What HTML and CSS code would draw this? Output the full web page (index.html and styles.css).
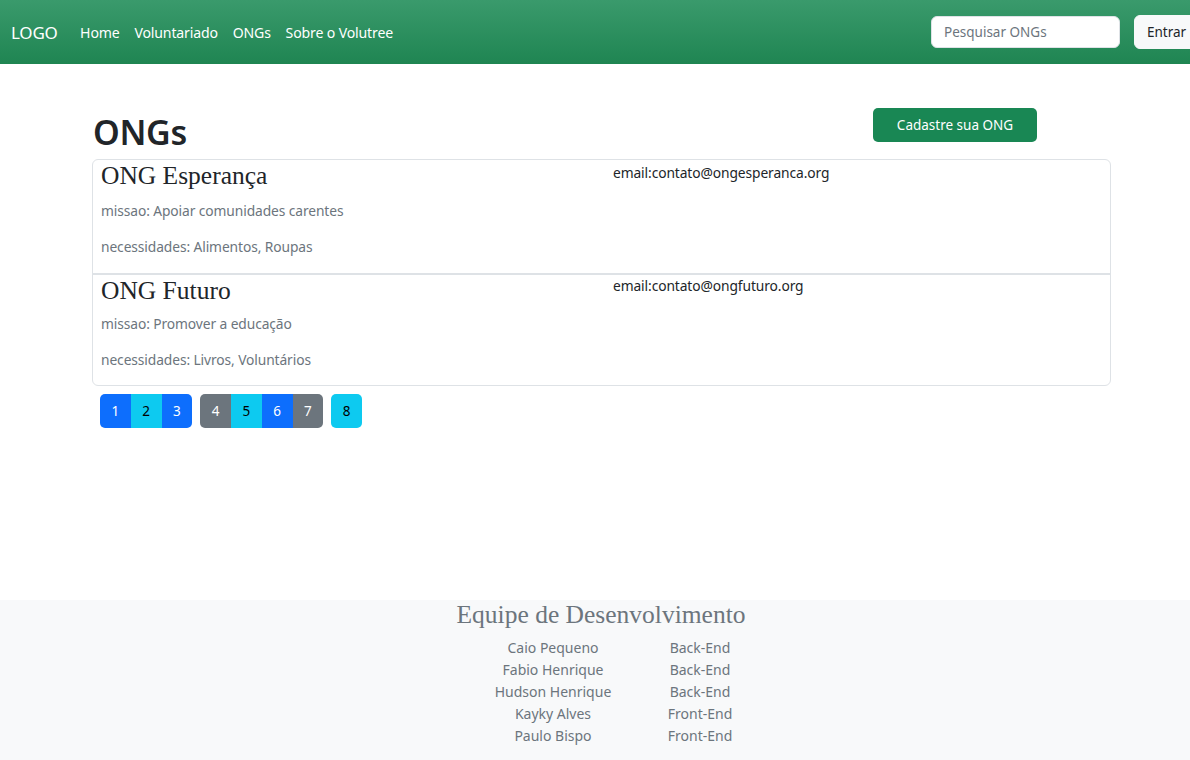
FILE: index.html
```html
<!DOCTYPE html>
<html lang="pt-BR">
<head>
<meta charset="utf-8">
<title>ONGs</title>
<link rel="stylesheet" href="styles.css">
</head>
<body>
<nav class="navbar">
  <div class="nav-left">
    <a class="brand" href="#">LOGO</a>
    <ul class="nav-links">
      <li><a href="#">Home</a></li>
      <li><a href="#">Voluntariado</a></li>
      <li><a href="#">ONGs</a></li>
      <li><a href="#">Sobre o Volutree</a></li>
    </ul>
  </div>
  <div class="nav-right">
    <input class="search" type="text" placeholder="Pesquisar ONGs">
    <button class="btn-enter">Entrar</button>
  </div>
</nav>

<main class="main">
  <div class="header-row">
    <h1 class="page-title">ONGs</h1>
    <button class="btn-register">Cadastre sua ONG</button>
  </div>

  <div class="list">
    <div class="item">
      <div class="item-left">
        <h2 class="item-title">ONG Esperança</h2>
        <p class="item-text">missao: Apoiar comunidades carentes</p>
        <p class="item-text">necessidades: Alimentos, Roupas</p>
      </div>
      <div class="item-right">
        <p class="item-email">email:contato@ongesperanca.org</p>
      </div>
    </div>
    <div class="item">
      <div class="item-left">
        <h2 class="item-title">ONG Futuro</h2>
        <p class="item-text">missao: Promover a educação</p>
        <p class="item-text">necessidades: Livros, Voluntários</p>
      </div>
      <div class="item-right">
        <p class="item-email">email:contato@ongfuturo.org</p>
      </div>
    </div>
  </div>

  <div class="pagination">
    <div class="btn-group">
      <button class="pg blue">1</button>
      <button class="pg cyan">2</button>
      <button class="pg blue">3</button>
    </div>
    <div class="btn-group">
      <button class="pg gray">4</button>
      <button class="pg cyan">5</button>
      <button class="pg blue">6</button>
      <button class="pg gray">7</button>
    </div>
    <div class="btn-group">
      <button class="pg cyan">8</button>
    </div>
  </div>
</main>

<footer class="footer">
  <h3 class="footer-title">Equipe de Desenvolvimento</h3>
  <div class="team">
    <span>Caio Pequeno</span><span>Back-End</span>
    <span>Fabio Henrique</span><span>Back-End</span>
    <span>Hudson Henrique</span><span>Back-End</span>
    <span>Kayky Alves</span><span>Front-End</span>
    <span>Paulo Bispo</span><span>Front-End</span>
  </div>
</footer>
</body>
</html>
```

FILE: styles.css
```css
* { box-sizing: border-box; }

html, body {
  margin: 0;
  padding: 0;
  overflow-x: hidden;
}

body {
  font-family: "Noto Sans", "Open Sans", sans-serif;
  color: #212529;
  background: #fff;
  height: 760px;
  display: flex;
  flex-direction: column;
}

/* NAVBAR */
.navbar {
  height: 64px;
  background: linear-gradient(180deg, #3a9a6c 0%, #1f8552 100%);
  display: flex;
  align-items: center;
  justify-content: space-between;
  padding-left: 11px;
  overflow: hidden;
  flex: none;
}

.nav-left {
  display: flex;
  align-items: center;
}

.brand {
  color: #fff;
  text-decoration: none;
  font-size: 17px;
  margin-right: 15px;
  letter-spacing: -0.2px;
}

.nav-links {
  list-style: none;
  margin: 0;
  padding: 0;
  display: flex;
}

.nav-links a {
  display: block;
  color: #fff;
  text-decoration: none;
  font-size: 14.1px;
  padding: 0 7.4px;
  letter-spacing: -0.15px;
}

.nav-right {
  display: flex;
  align-items: center;
  margin-right: -30px;
}

.search {
  width: 189px;
  height: 32px;
  border: 1px solid #dee2e6;
  border-radius: 6px;
  padding: 0 12px;
  font-family: inherit;
  font-size: 13.5px;
  color: #212529;
  margin-right: 14px;
}

.search::placeholder { color: #6c757d; }

.btn-enter {
  height: 34px;
  width: 86px;
  border: 1px solid #f8f9fa;
  background: #f8f9fa;
  border-radius: 6px;
  font-family: inherit;
  font-size: 13.5px;
  color: #212529;
  text-align: left;
  padding: 0 12px;
}

/* MAIN */
.main {
  width: 1019px;
  margin-left: 92px;
  flex: 1;
}

.header-row {
  display: flex;
  justify-content: space-between;
  align-items: flex-start;
  padding-top: 44px;
  height: 95px;
}

.page-title {
  margin: 0 0 6px 1px;
  font-size: 34px;
  font-weight: 600;
  line-height: 1.2;
  letter-spacing: -0.3px;
  color: #212529;
  align-self: flex-end;
}

.btn-register {
  width: 164px;
  height: 34px;
  margin-right: 74px;
  background: #198754;
  color: #fff;
  border: none;
  border-radius: 5px;
  font-family: inherit;
  font-size: 13.5px;
}

.list {
  border: 1px solid #dee2e6;
  border-radius: 6px;
}

.item {
  display: grid;
  grid-template-columns: 520px 1fr;
  height: 113px;
}

.item + .item {
  border-top: 2px solid #dee2e6;
  height: 112px;
}

.item + .item .item-title { margin-bottom: 8px; }
.item + .item .item-email { margin-top: 1px; }

.item-left { padding-left: 8px; }

.item-title {
  font-family: "Liberation Serif", "Times New Roman", serif;
  font-weight: 400;
  font-size: 25.5px;
  line-height: 31px;
  margin: 0 0 10px;
  color: #212529;
}

.item-text {
  font-size: 13.8px;
  color: #6c757d;
  line-height: 20px;
  margin: 0 0 16px;
  letter-spacing: -0.1px;
}

.item-email {
  margin: 3px 0 0;
  font-size: 13.8px;
  line-height: 20px;
  color: #212529;
  letter-spacing: -0.1px;
}

/* PAGINATION */
.pagination {
  display: flex;
  gap: 8px;
  margin-top: 8px;
  margin-left: 8px;
}

.btn-group {
  display: flex;
  border-radius: 5px;
  overflow: hidden;
}

.pg {
  width: 30.75px;
  height: 34px;
  border: none;
  font-family: inherit;
  font-size: 13.5px;
  padding: 0;
}

.blue { background: #0d6efd; color: #fff; }
.cyan { background: #0dcaf0; color: #000; }
.gray { background: #6c757d; color: #fff; }

/* FOOTER */
.footer {
  height: 160px;
  background: #f8f9fa;
  flex: none;
  padding-left: 12px;
  text-align: center;
}

.footer-title {
  font-family: "Liberation Serif", "Times New Roman", serif;
  font-weight: 400;
  font-size: 25.5px;
  line-height: 30px;
  color: #6c757d;
  margin: 0 0 7px;
}

.team {
  display: grid;
  grid-template-columns: 198px 96px;
  justify-content: center;
  font-size: 14px;
  line-height: 22px;
  color: #6c757d;
}
```
